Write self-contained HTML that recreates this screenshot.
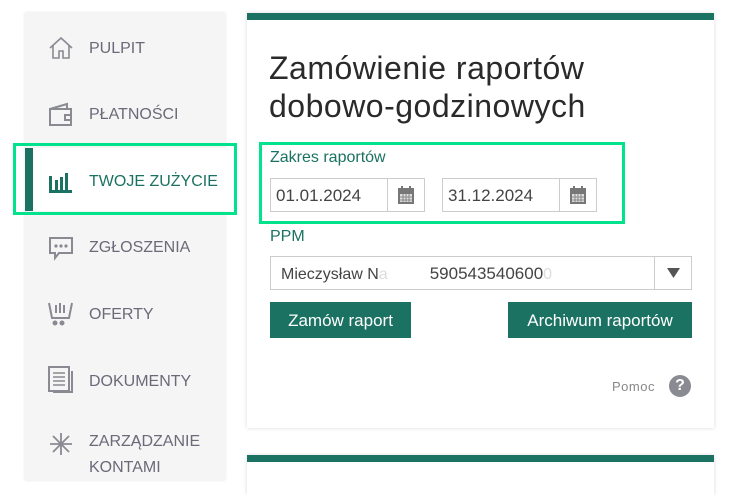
<!DOCTYPE html>
<html><head><meta charset="utf-8"><style>
*{box-sizing:border-box;margin:0;padding:0}
body{width:737px;height:488px;background:#fff;position:relative;overflow:hidden;font-family:"Liberation Sans",sans-serif}
.side{position:absolute;left:25px;top:13px;width:200px;height:467px;background:#f5f5f5;box-shadow:0 0 3px rgba(0,0,0,.12)}
.it{position:absolute;left:64px;font-size:16px;color:#6c6a78;line-height:26px}
.ic{position:absolute;left:23px}
.card{position:absolute;left:247px;width:467px;background:#fff;box-shadow:0 0 4px rgba(0,0,0,.15);border-top:7px solid #1b7262}
.hl{position:absolute;border:3px solid #00e38c}
.inp{position:absolute;height:34px;border:1px solid #ccc;background:#fff;font-size:17px;color:#444;line-height:34px;padding-left:5px}
.inp .cal{position:absolute;right:0;top:0;width:37px;height:32px;border-left:1px solid #ccc}
.btn{position:absolute;top:302px;height:36px;background:#1b7262;color:#fff;font-size:17px;line-height:38px;text-align:center}
</style></head><body>
<div class="side">
 <svg class="ic" style="top:22px" width="26" height="26" viewBox="0 0 26 26" fill="none" stroke="#8a8a92" stroke-width="1.6"><path d="M2 13L13 3l11 10M5 10v13h6v-7h4v7h6V10"/></svg>
 <div class="it" style="top:23px">PULPIT</div>
 <svg class="ic" style="top:88px" width="26" height="26" viewBox="0 0 26 26" fill="none" stroke="#8a8a92" stroke-width="2"><path d="M2 8h21v16H2zM2 8l17-5v5M17 14h6v5h-6z"/></svg>
 <div class="it" style="top:89px">PŁATNOŚCI</div>
 <div style="position:absolute;left:0;top:135px;width:207px;height:63px;background:#fff"></div>
 <div style="position:absolute;left:0;top:135px;width:8px;height:63px;background:#1b7262"></div>
 <svg class="ic" style="top:155px" width="26" height="26" viewBox="0 0 26 26" fill="#1b7262"><rect x="1" y="8" width="3" height="14"/><rect x="7" y="12" width="3" height="10"/><rect x="12" y="9" width="3" height="13"/><rect x="17" y="5" width="3" height="17"/><rect x="1" y="22" width="23" height="3"/></svg>
 <div class="it" style="top:156px;color:#1b7262">TWOJE ZUŻYCIE</div>
 <svg class="ic" style="top:222px" width="26" height="26" viewBox="0 0 26 26" fill="none" stroke="#8a8a92" stroke-width="2"><path d="M2 3h22v15H11l-4 5v-5H2z"/><circle cx="8" cy="11" r=".6" fill="#8a8a92"/><circle cx="13" cy="11" r=".6" fill="#8a8a92"/><circle cx="18" cy="11" r=".6" fill="#8a8a92"/></svg>
 <div class="it" style="top:222px">ZGŁOSZENIA</div>
 <svg class="ic" style="top:287px" width="26" height="26" viewBox="0 0 26 26" fill="none" stroke="#8a8a92" stroke-width="2"><path d="M1 3l3 15h17l3-15M8 5v8M12 3v10M16 5v8"/><circle cx="7" cy="23" r="1.5" fill="#8a8a92"/><circle cx="14" cy="23" r="1.5" fill="#8a8a92"/></svg>
 <div class="it" style="top:289px">OFERTY</div>
 <svg class="ic" style="top:353px" width="26" height="28" viewBox="0 0 26 28" fill="none" stroke="#8a8a92" stroke-width="2"><path d="M1 1h20v24H1zM5 26h19V5"/><path d="M5 7h12M5 11h12M5 15h12M5 19h12" stroke-width="1.5"/></svg>
 <div class="it" style="top:356px">DOKUMENTY</div>
 <svg class="ic" style="top:418px" width="26" height="26" viewBox="0 0 26 26" fill="none" stroke="#8a8a92" stroke-width="1.8"><path d="M13 2v22M2 13h22M5 5l16 16M21 5L5 21"/></svg>
 <div class="it" style="top:416px">ZARZĄDZANIE<br>KONTAMI</div>
</div>
<div class="hl" style="left:13px;top:143px;width:224px;height:72px"></div>

<div class="card" style="top:13px;height:415px">
 <div style="position:absolute;left:22px;top:29px;font-size:32px;line-height:38px;color:#2a2a2a;letter-spacing:.5px">Zamówienie raportów<br>dobowo-godzinowych</div>
</div>
<div class="card" style="top:455px;height:40px"></div>

<div class="hl" style="left:259px;top:142px;width:366px;height:82px"></div>
<div style="position:absolute;left:270px;top:149px;font-size:16px;color:#1b7262">Zakres raportów</div>
<div class="inp" style="left:270px;top:178px;width:155px">01.01.2024<div class="cal"><svg style="position:absolute;left:9px;top:6px" width="18" height="20" viewBox="0 0 18 20"><rect x="1" y="3" width="16" height="16" fill="#777"/><rect x="3" y="9" width="12" height="8" fill="#ddd"/><rect x="4" y="1" width="2" height="5" fill="#777"/><rect x="12" y="1" width="2" height="5" fill="#777"/><path d="M3 12h12M3 15h12M6 9v8M9 9v8M12 9v8" stroke="#777" stroke-width=".8"/></svg></div></div>
<div class="inp" style="left:442px;top:178px;width:155px">31.12.2024<div class="cal"><svg style="position:absolute;left:9px;top:6px" width="18" height="20" viewBox="0 0 18 20"><rect x="1" y="3" width="16" height="16" fill="#777"/><rect x="3" y="9" width="12" height="8" fill="#ddd"/><rect x="4" y="1" width="2" height="5" fill="#777"/><rect x="12" y="1" width="2" height="5" fill="#777"/><path d="M3 12h12M3 15h12M6 9v8M9 9v8M12 9v8" stroke="#777" stroke-width=".8"/></svg></div></div>
<div style="position:absolute;left:270px;top:228px;font-size:16px;color:#1b7262">PPM</div>
<div class="inp" style="left:270px;top:256px;width:422px;padding-left:10px;font-size:16px">Mieczysław N<span style="color:#ddd">a</span><span style="margin-left:42px;font-size:17px">590543540600</span><span style="color:#ddd">0</span><div class="cal" style="background:#fff"><svg style="position:absolute;left:12px;top:11px" width="13" height="10"><path d="M0 0h13L6.5 10z" fill="#555"/></svg></div></div>
<div class="btn" style="left:270px;width:141px">Zamów raport</div>
<div class="btn" style="left:508px;width:184px">Archiwum raportów</div>
<div style="position:absolute;left:612px;top:379px;font-size:13px;color:#888;letter-spacing:.5px">Pomoc</div>
<div style="position:absolute;left:669px;top:375px;width:22px;height:22px;border-radius:50%;background:#8a8a92;color:#fff;font-weight:bold;font-size:16px;line-height:22px;text-align:center">?</div>
</body></html>
